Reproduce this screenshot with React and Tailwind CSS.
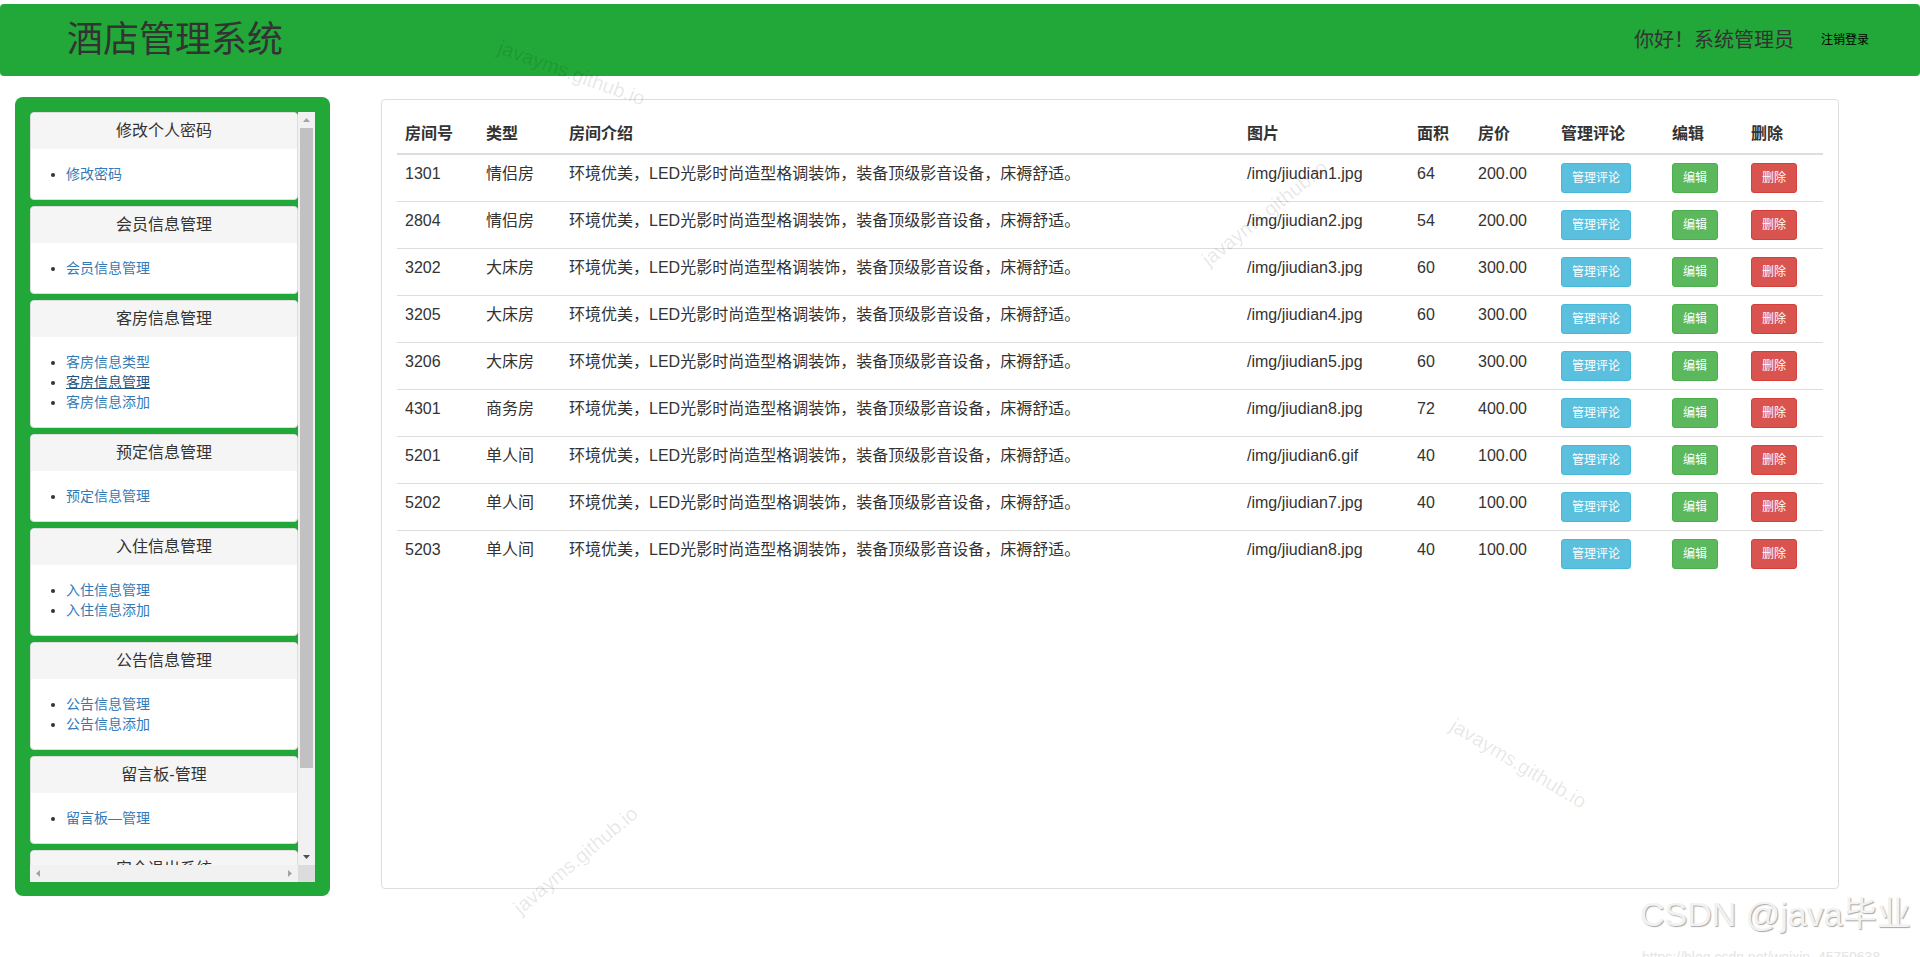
import React from 'react';

const menus = [
    { title: '修改个人密码', items: ['修改密码'] },
    { title: '会员信息管理', items: ['会员信息管理'] },
    { title: '客房信息管理', items: ['客房信息类型', '客房信息管理', '客房信息添加'], active: 1 },
    { title: '预定信息管理', items: ['预定信息管理'] },
    { title: '入住信息管理', items: ['入住信息管理', '入住信息添加'] },
    { title: '公告信息管理', items: ['公告信息管理', '公告信息添加'] },
    { title: '留言板-管理', items: ['留言板—管理'] },
    { title: '安全退出系统', items: ['安全退出系统'] },
];

const intro = '环境优美，LED光影时尚造型格调装饰，装备顶级影音设备，床褥舒适。';

const rooms = [
    { no: '1301', type: '情侣房', img: '/img/jiudian1.jpg', area: 64, price: '200.00' },
    { no: '2804', type: '情侣房', img: '/img/jiudian2.jpg', area: 54, price: '200.00' },
    { no: '3202', type: '大床房', img: '/img/jiudian3.jpg', area: 60, price: '300.00' },
    { no: '3205', type: '大床房', img: '/img/jiudian4.jpg', area: 60, price: '300.00' },
    { no: '3206', type: '大床房', img: '/img/jiudian5.jpg', area: 60, price: '300.00' },
    { no: '4301', type: '商务房', img: '/img/jiudian8.jpg', area: 72, price: '400.00' },
    { no: '5201', type: '单人间', img: '/img/jiudian6.gif', area: 40, price: '100.00' },
    { no: '5202', type: '单人间', img: '/img/jiudian7.jpg', area: 40, price: '100.00' },
    { no: '5203', type: '单人间', img: '/img/jiudian8.jpg', area: 40, price: '100.00' },
];

const MenuPanel = ({ menu }) => (
    <div className="bg-white border border-[#ddd] rounded-[4px] overflow-hidden shrink-0">
        <div className="bg-[#f5f5f5] py-[10px] text-center text-[16px] leading-[16px] text-[#333]">{menu.title}</div>
        <div className="p-[15px]">
            <ul className="list-disc pl-[20px] text-[14px] leading-[20px] text-[#333]">
                {menu.items.map((item, i) => (
                    <li key={item}>
                        <a
                            href="#"
                            className={menu.active === i ? 'text-[#23527c] underline' : 'text-[#337ab7]'}
                        >
                            {item}
                        </a>
                    </li>
                ))}
            </ul>
        </div>
    </div>
);

const Arrow = ({ dir, color }) => {
    const pts = {
        up: '0,4 3.5,0 7,4',
        down: '0,0 7,0 3.5,4',
        left: '4,0 4,7 0,3.5',
        right: '0,0 0,7 4,3.5',
    };
    const vertical = dir === 'up' || dir === 'down';
    return (
        <svg width={vertical ? 7 : 4} height={vertical ? 4 : 7} viewBox={vertical ? '0 0 7 4' : '0 0 4 7'}>
            <polygon points={pts[dir]} fill={color} />
        </svg>
    );
};

const Sidebar = () => (
    <aside className="ml-[15px] w-[315px] h-[799px] bg-[#22a838] rounded-[8px] pt-[15px] px-[15px] pb-[14px] shrink-0">
        <div className="grid grid-cols-[268px_17px] grid-rows-[753px_17px] h-[770px]">
            <div className="overflow-hidden flex flex-col gap-[6px]">
                {menus.map(m => <MenuPanel key={m.title} menu={m} />)}
            </div>
            <div className="bg-[#f1f1f1] flex flex-col items-center">
                <div className="h-[16px] flex items-center justify-center"><Arrow dir="up" color="#a3a3a3" /></div>
                <div className="w-[13px] h-[640px] bg-[#c1c1c1]" />
                <div className="flex-1" />
                <div className="h-[17px] flex items-center justify-center"><Arrow dir="down" color="#505050" /></div>
            </div>
            <div className="bg-[#f1f1f1] flex items-center justify-between px-[6px]">
                <Arrow dir="left" color="#a3a3a3" />
                <Arrow dir="right" color="#a3a3a3" />
            </div>
            <div className="bg-[#dcdcdc]" />
        </div>
    </aside>
);

const Btn = ({ color, children }) => (
    <button className={`block h-[30px] px-[10px] text-[12px] leading-[18px] text-white border rounded-[3px] ${color}`}>
        {children}
    </button>
);

const RoomTable = () => (
    <table className="w-full table-fixed border-collapse text-[16px] leading-[22px] text-[#333]">
        <colgroup>
            <col className="w-[81px]" />
            <col className="w-[83px]" />
            <col className="w-[678px]" />
            <col className="w-[170px]" />
            <col className="w-[61px]" />
            <col className="w-[83px]" />
            <col className="w-[111px]" />
            <col className="w-[79px]" />
            <col />
        </colgroup>
        <thead>
            <tr>
                {['房间号', '类型', '房间介绍', '图片', '面积', '房价', '管理评论', '编辑', '删除'].map(h => (
                    <th key={h} className="text-left font-bold p-[8px] border-b-2 border-[#ddd]">{h}</th>
                ))}
            </tr>
        </thead>
        <tbody>
            {rooms.map((r, i) => {
                const td = `p-[8px] align-top ${i === 0 ? '' : 'border-t border-[#ddd]'}`;
                return (
                    <tr key={r.no}>
                        <td className={td}>{r.no}</td>
                        <td className={td}>{r.type}</td>
                        <td className={td}>{intro}</td>
                        <td className={td}>{r.img}</td>
                        <td className={td}>{r.area}</td>
                        <td className={td}>{r.price}</td>
                        <td className={td}><Btn color="bg-[#5bc0de] border-[#46b8da]">管理评论</Btn></td>
                        <td className={td}><Btn color="bg-[#5cb85c] border-[#4cae4c]">编辑</Btn></td>
                        <td className={td}><Btn color="bg-[#d9534f] border-[#d43f3a]">删除</Btn></td>
                    </tr>
                );
            })}
        </tbody>
    </table>
);

const Watermark = ({ className }) => (
    <span className={`absolute whitespace-nowrap text-[20px] leading-[23px] text-black/10 pointer-events-none ${className}`}>
        javayms.github.io
    </span>
);

export default function App() {
    return (
        <div className="relative w-[1920px] h-[957px] overflow-hidden bg-white font-['Liberation_Sans','Noto_Sans_CJK_SC',sans-serif] text-[#333]">
            <header className="mt-[4px] h-[72px] bg-[#22a838] rounded-[4px] flex items-center pl-[67px] pr-[51px]">
                <h1 className="text-[36px] leading-none text-[#333]">酒店管理系统</h1>
                <div className="ml-auto flex items-center">
                    <span className="text-[20px] leading-none text-[#333]">你好！系统管理员</span>
                    <a href="#" className="ml-[27px] text-[12px] leading-none text-black">注销登录</a>
                </div>
            </header>

            <div className="flex items-start mt-[21px]">
                <Sidebar />
                <main className="ml-[51px] mt-[2px] w-[1458px] h-[790px] border border-[#ddd] rounded-[4px] p-[15px]">
                    <RoomTable />
                </main>
            </div>

            <Watermark className="left-[503px] top-[36px] rotate-[20deg] origin-top-left" />
            <Watermark className="left-[1212px] top-[248px] -rotate-[39deg] origin-bottom-left" />
            <Watermark className="left-[1458px] top-[714px] rotate-[31deg] origin-top-left" />
            <Watermark className="left-[524px] top-[896px] -rotate-[40deg] origin-bottom-left" />

            <div className="absolute left-[1640px] top-[897px] text-[34px] leading-[34px] text-[#f2f2f2] whitespace-nowrap [text-shadow:1px_1px_1px_rgba(0,0,0,0.35)] pointer-events-none">
                CSDN @java毕业
            </div>
            <div className="absolute left-[1642px] top-[949px] text-[14px] leading-[16px] text-[#e4e4e4] whitespace-nowrap pointer-events-none">
                https://blog.csdn.net/weixin_45750638
            </div>
        </div>
    );
}
